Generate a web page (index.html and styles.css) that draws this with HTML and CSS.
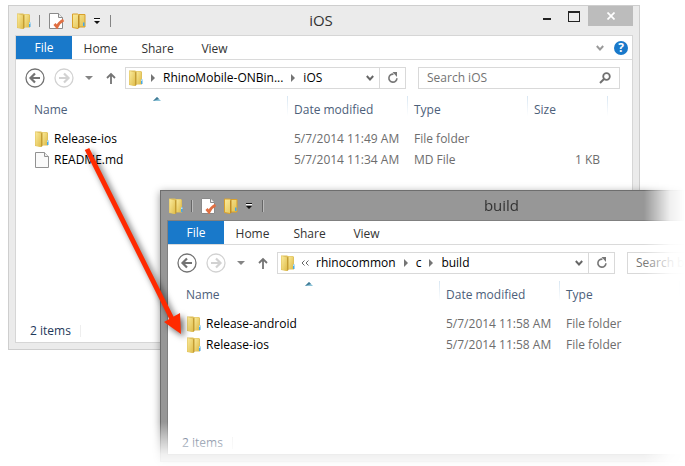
FILE: index.html
```html
<!DOCTYPE html>
<html lang="en">
<head>
<meta charset="utf-8">
<title>File Explorer</title>
<link rel="stylesheet" href="styles.css">
</head>
<body>
<svg class="defs" aria-hidden="true">
  <defs>
    <linearGradient id="gold" x1="0" x2="1" y1="0" y2="1"><stop offset="0" stop-color="#fbeb9c"/><stop offset="1" stop-color="#dfbd4c"/></linearGradient>
    <symbol id="folder" viewBox="0 0 14 16">
      <path d="M0 .5h6l1 .5h5l1 1v12.500H7L6 16l-6-1z" fill="#dfc05c"/>
      <path d="M7 1.500h5V14H7z" fill="url(#gold)"/>
      <path d="M.5 1 6 2.500V16L.5 14.500z" fill="url(#gold)"/>
      <path d="M6 2.500 7.500 1.500V15L6 16z" fill="#c49d34"/>
      <path d="M12 9.500h1.500V14H12z" fill="#48a8e4"/><path d="M12 9.500h1.500V11H12z" fill="#b5e2fa"/>
    </symbol>
    <symbol id="new-folder" viewBox="0 0 14 16">
      <path d="M.5 1h5l1 .5h6.500v12.500H7l-1 1.500-5.500-1z" fill="url(#gold)" stroke="#d9a02b"/>
      <path d="M6 2.500 7.500 1.500v13L6 15.500z" fill="#c08c24"/>
      <path d="M11 9.500h1.500V13H11z" fill="#48a8e4"/>
    </symbol>
    <symbol id="page" viewBox="0 0 14 16">
      <path d="M.5.5h9l4 4v11H.5z" fill="#fafafa" stroke="#929292"/><path d="M9.500.5v4h4" fill="#eee" stroke="#929292"/>
    </symbol>
    <symbol id="props" viewBox="0 0 16 16">
      <path d="M.5.5h9l4 4v11H.5z" fill="#fff" stroke="#8a8a8a"/><path d="M9.500.5v4h4" fill="#eee" stroke="#8a8a8a"/>
      <path d="m5.500 11 2.500 3c1.500-3.500 3.500-5.500 6.500-7" fill="none" stroke="#e06f42" stroke-width="2.800"/>
    </symbol>
    <symbol id="custom" viewBox="0 0 8 8"><path d="M1 2.500h6" stroke="#fff"/><path d="M1 1h6v1H1zM1 4h6L4 7z" fill="#111"/></symbol>
    <symbol id="arrow-circle" viewBox="0 0 20 20"><circle cx="10" cy="10" r="9" fill="none" stroke="currentColor" stroke-width="1.300"/><path d="M15 10H6M10 5.500 5.500 10l4.500 4.500" fill="none" stroke="currentColor" stroke-width="2.200"/></symbol>
    <symbol id="forward-circle" viewBox="0 0 20 20"><circle cx="10" cy="10" r="9" fill="none" stroke="currentColor" stroke-width="1.300"/><path d="M5 10h9M10 5.500l4.500 4.500-4.500 4.500" fill="none" stroke="currentColor" stroke-width="2.200"/></symbol>
    <symbol id="up" viewBox="0 0 10 12"><path d="M5 12V2M1 6l4-4 4 4" fill="none" stroke="#747474" stroke-width="1.800"/></symbol>
    <symbol id="down" viewBox="0 0 8 4"><path d="M0 0h8L4 4z" fill="#858585"/></symbol>
    <symbol id="right" viewBox="0 0 4 8"><path d="M0 0v8l4-4z" fill="#757575"/></symbol>
    <symbol id="chevron" viewBox="0 0 8 6"><path d="m.8 1 3.200 3.500L7.200 1" fill="none" stroke="currentColor" stroke-width="1.900"/></symbol>
    <symbol id="refresh" viewBox="0 0 12 12"><path d="M6.500 2.200a4 4 0 1 0 3.400 4" fill="none" stroke="#777" stroke-width="1.600"/><path d="M5.500 0h4.500v5z" fill="#777"/></symbol>
    <symbol id="lens" viewBox="0 0 12 12"><circle cx="7.500" cy="4.500" r="3.300" fill="none" stroke="#707070" stroke-width="1.800"/><path d="M5 7 1 11" stroke="#707070" stroke-width="2"/></symbol>
    <symbol id="sort" viewBox="0 0 8 4"><path d="M0 4h8L4 0z" fill="#8cc3d8"/><path d="M0 4 4 0l2 2z" fill="#427a94"/></symbol>
  </defs>
</svg>
<main class="desktop">
  <section class="window window-ios" aria-label="iOS">
    <header class="titlebar">
      <div class="quick">
        <svg class="folder"><use href="#folder"/></svg><i></i>
        <button aria-label="Properties"><svg class="props"><use href="#props"/></svg></button>
        <button aria-label="New folder"><svg class="folder"><use href="#new-folder"/></svg></button>
        <button class="custom" aria-label="Customize toolbar"><svg><use href="#custom"/></svg></button><i></i>
      </div>
      <h1>iOS</h1>
      <div class="controls">
        <button class="minimize" aria-label="Minimize"></button>
        <button class="maximize" aria-label="Maximize"></button>
        <button class="close" aria-label="Close"><svg viewBox="0 0 8 8"><path d="m.5.5 7 7m0-7-7 7" stroke="#fff" stroke-width="1.700"/></svg></button>
      </div>
    </header>
    <div class="client">
      <nav class="ribbon">
        <button class="file">File</button><button>Home</button><button>Share</button><button>View</button>
        <div class="ribbon-end"><button aria-label="Expand ribbon"><svg class="chev"><use href="#chevron"/></svg></button><button class="help" aria-label="Help">?</button></div>
      </nav>
      <div class="navbar">
        <button class="back" aria-label="Back"><svg><use href="#arrow-circle"/></svg></button>
        <button class="back forward" aria-label="Forward"><svg><use href="#forward-circle"/></svg></button>
        <button class="recent" aria-label="Recent"><svg><use href="#down"/></svg></button>
        <button class="up" aria-label="Up"><svg><use href="#up"/></svg></button>
        <div class="address">
          <svg class="folder"><use href="#folder"/></svg>
          <svg class="sep"><use href="#right"/></svg><a href="#">RhinoMobile-ONBin...</a>
          <svg class="sep"><use href="#right"/></svg><a href="#">iOS</a>
          <button class="history" aria-label="Previous locations"><svg class="chev"><use href="#chevron"/></svg></button>
          <button class="refresh" aria-label="Refresh"><svg><use href="#refresh"/></svg></button>
        </div>
        <label class="search"><input type="search" placeholder="Search iOS" aria-label="Search iOS"><svg><use href="#lens"/></svg></label>
      </div>
      <table>
        <colgroup><col class="c-name"><col class="c-date"><col class="c-type"><col class="c-size"><col></colgroup>
        <thead><tr><th>Name<svg class="sort"><use href="#sort"/></svg></th><th>Date modified</th><th>Type</th><th>Size</th><th></th></tr></thead>
        <tbody>
          <tr><td><span class="name"><svg class="folder"><use href="#folder"/></svg>Release-ios</span></td><td>5/7/2014 11:49 AM</td><td>File folder</td><td></td><td></td></tr>
          <tr><td><span class="name"><svg class="folder"><use href="#page"/></svg>README.md</span></td><td>5/7/2014 11:34 AM</td><td>MD File</td><td class="size">1 KB</td><td></td></tr>
        </tbody>
      </table>
      <footer><span>2 items</span></footer>
    </div>
  </section>

  <div class="fade">
    <section class="window window-build" aria-label="build">
      <header class="titlebar">
        <div class="quick">
          <svg class="folder"><use href="#folder"/></svg><i></i>
          <button aria-label="Properties"><svg class="props"><use href="#props"/></svg></button>
          <button aria-label="New folder"><svg class="folder"><use href="#new-folder"/></svg></button>
          <button class="custom" aria-label="Customize toolbar"><svg><use href="#custom"/></svg></button><i></i>
        </div>
        <h1>build</h1>
      </header>
      <div class="client">
        <nav class="ribbon"><button class="file">File</button><button>Home</button><button>Share</button><button>View</button></nav>
        <div class="navbar">
          <button class="back" aria-label="Back"><svg><use href="#arrow-circle"/></svg></button>
          <button class="back forward" aria-label="Forward"><svg><use href="#forward-circle"/></svg></button>
          <button class="recent" aria-label="Recent"><svg><use href="#down"/></svg></button>
          <button class="up" aria-label="Up"><svg><use href="#up"/></svg></button>
          <div class="address">
            <svg class="folder"><use href="#folder"/></svg>
            <svg class="more" viewBox="0 0 8 6"><path d="M3.500.5 1 3l2.500 2.500M7.500.5 5 3l2.500 2.500" fill="none" stroke="#666"/></svg><a href="#">rhinocommon</a>
            <svg class="sep"><use href="#right"/></svg><a href="#">c</a>
            <svg class="sep"><use href="#right"/></svg><a href="#">build</a>
            <button class="history" aria-label="Previous locations"><svg class="chev"><use href="#chevron"/></svg></button>
            <button class="refresh" aria-label="Refresh"><svg><use href="#refresh"/></svg></button>
          </div>
          <label class="search"><input type="search" placeholder="Search build" aria-label="Search build"></label>
        </div>
        <table>
          <colgroup><col class="c-name"><col class="c-date"><col class="c-type"><col></colgroup>
          <thead><tr><th>Name<svg class="sort"><use href="#sort"/></svg></th><th>Date modified</th><th>Type</th><th></th></tr></thead>
          <tbody>
            <tr><td><span class="name"><svg class="folder"><use href="#folder"/></svg>Release-android</span></td><td>5/7/2014 11:58 AM</td><td>File folder</td><td></td></tr>
            <tr><td><span class="name"><svg class="folder"><use href="#folder"/></svg>Release-ios</span></td><td>5/7/2014 11:58 AM</td><td>File folder</td><td></td></tr>
          </tbody>
        </table>
        <footer><span>2 items</span></footer>
      </div>
    </section>
  </div>
  <svg class="pointer" viewBox="0 0 110 200" aria-hidden="true"><path d="m7 9 85 170" stroke="#ff2a00" stroke-width="5"/><path d="m84 182 16-9 1 21z" fill="#ff2a00"/></svg>
</main>
</body>
</html>
```

FILE: styles.css
```css
* { box-sizing: border-box; }
body { margin: 0; background: #fff; font: 12px/20px "Open Sans", "Noto Sans", sans-serif; color: #000; }
button { border: 0; padding: 0; background: none; font: inherit; color: inherit; display: flex; align-items: center; justify-content: center; }
a { color: inherit; text-decoration: none; }
svg { display: block; flex: none; }
.defs { position: absolute; width: 0; height: 0; }
.desktop { position: relative; min-height: 100vh; overflow: hidden; }
.window { display: flex; flex-direction: column; padding: 0 6px 6px; border: 1px solid #cecece; background: #ebebeb; }
.window-ios { position: absolute; left: 8px; top: 5px; width: 632px; min-height: 345px; }
.fade {
  position: absolute; left: 148px; top: 178px; padding: 12px;
  mask-image: linear-gradient(to right, #000 496px, rgb(0 0 0 / 15%) 522px, transparent 537px), linear-gradient(#000 244px, rgb(0 0 0 / 50%) 262px, rgb(0 0 0 / 15%) 276px, transparent 292px);
  mask-composite: intersect;
}
.window-build { width: 689px; min-height: 272px; background: #979797; border-color: #6e6e6e; box-shadow: 0 2px 8px rgb(0 0 0 / 40%); }
.titlebar { position: relative; height: 29px; display: flex; justify-content: space-between; }
h1 { position: absolute; left: 0; right: 6px; top: 4px; margin: 0; font-size: 15px; line-height: 20px; font-weight: 400; text-align: center; color: #333; }
.quick { display: flex; align-items: center; gap: 7px; height: 29px; padding-left: 2px; }
.quick i { width: 1px; height: 12px; margin: 0 2px 0 1px; background: #858585; }
.window-build .quick i { background: #666; box-shadow: 1px 0 #bbb; }
.folder { width: 14px; height: 16px; }
.props { width: 16px; height: 16px; }
.custom { margin-right: 1px; }
.custom svg { width: 8px; height: 8px; }
.controls { position: relative; display: flex; height: 20px; }
.minimize { width: 26px; }
.minimize::before { content: ""; width: 8px; height: 2px; margin-top: 6px; background: #222; }
.maximize { width: 28px; }
.maximize::before { content: ""; width: 10px; height: 8px; border: 1px solid #222; border-top-width: 2px; }
.close { width: 45px; background: #bcbcbc; }
.close svg { width: 8px; height: 8px; }
.client { flex: 1; display: flex; flex-direction: column; border: 1px solid #d6d6d6; background: #fff; }
.window-build .client { border-color: #808080; }
.ribbon { display: flex; height: 24px; border-bottom: 1px solid #dadada; color: #333; }
.ribbon > button { width: 57px; padding-top: 2px; }
.ribbon .file { width: 56px; padding: 0; background: #1979ca; color: #fff; }
.ribbon-end { display: flex; align-items: center; gap: 10px; margin-left: auto; padding-right: 4px; color: #999; }
.chev { width: 8px; height: 6px; }
.help { width: 14px; height: 14px; border-radius: 50%; background: #1979ca; color: #fff; font-weight: 700; line-height: 14px; }
.navbar { display: flex; align-items: center; height: 36px; padding: 0 12px 0 9px; }
.back { width: 20px; margin-right: 9px; color: #737373; }
.back svg { width: 20px; height: 20px; }
.forward { color: #d2d2d2; }
.recent { width: 12px; }
.recent svg { width: 8px; height: 4px; }
.up { width: 10px; margin: 0 9px 0 11px; }
.up svg { width: 10px; height: 12px; }
.address { flex: 1; display: flex; align-items: center; height: 22px; padding-left: 3px; border: 1px solid #d9d9d9; white-space: nowrap; }
.sep { width: 4px; height: 8px; margin: 0 8px; }
.more { width: 8px; height: 6px; margin: 0 7px 0 6px; }
.history { width: 18px; margin-left: auto; color: #666; }
.refresh { width: 26px; height: 20px; border-left: 1px solid #d9d9d9; }
.refresh svg { width: 12px; height: 12px; }
.search { display: flex; align-items: center; width: 202px; height: 22px; margin-left: 12px; padding: 0 8px; border: 1px solid #d9d9d9; }
.search input { flex: 1; min-width: 0; padding: 0; border: 0; outline: 0; background: none; font: inherit; }
.search input::placeholder { color: #737373; opacity: 1; }
.search svg { width: 12px; height: 12px; }
table { width: 100%; table-layout: fixed; border-collapse: collapse; color: #6d6d6d; white-space: nowrap; }
.c-name { width: 271px; }
.c-date, .c-type { width: 120px; }
.c-size { width: 80px; }
th { position: relative; height: 32px; padding: 4px 7px 8px; font-weight: 400; text-align: left; color: #4c607a; background: linear-gradient(#d8e6f2, #fff) left top / 1px 20px no-repeat; }
th:first-child { padding-left: 18px; background: none; }
.sort { position: absolute; left: 137px; top: 1px; width: 8px; height: 4px; }
td { height: 21px; padding: 0 7px; }
td:first-child { padding-left: 19px; }
.name { display: flex; align-items: center; gap: 5px; color: #000; }
.size { text-align: right; }
footer { margin-top: auto; display: flex; padding: 0 14px 1px; color: #1e395b; }
footer span { padding-right: 10px; background: linear-gradient(#eee, #eee) right center / 1px 12px no-repeat; }
.pointer { position: absolute; left: 80px; top: 140px; width: 110px; height: 200px; filter: drop-shadow(3px 3px 3px rgb(0 0 0 / 60%)); pointer-events: none; }
```
